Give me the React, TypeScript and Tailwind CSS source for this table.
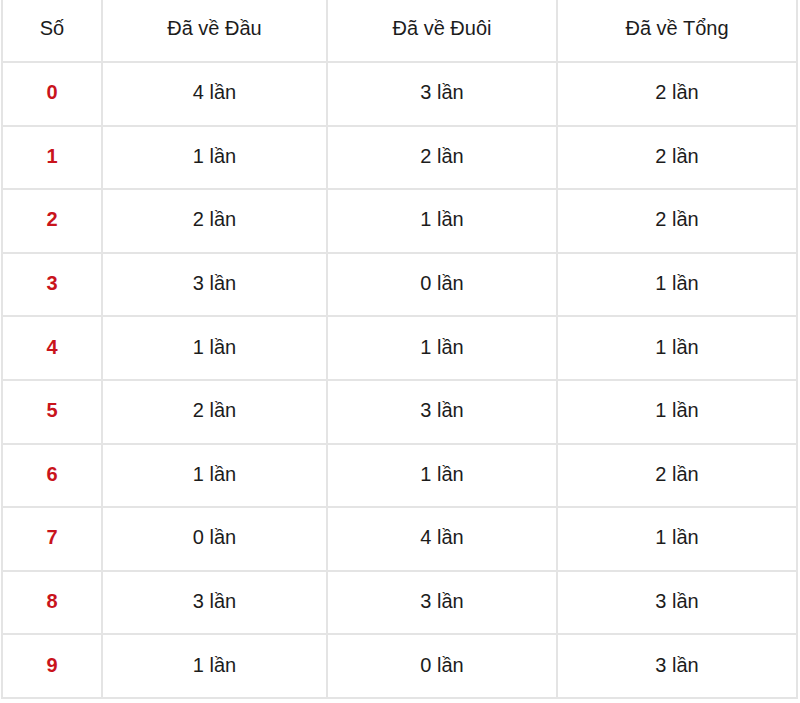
const rows: [number, number, number, number][] = [
  [0, 4, 3, 2],
  [1, 1, 2, 2],
  [2, 2, 1, 2],
  [3, 3, 0, 1],
  [4, 1, 1, 1],
  [5, 2, 3, 1],
  [6, 1, 1, 2],
  [7, 0, 4, 1],
  [8, 3, 3, 3],
  [9, 1, 0, 3],
];

const cell = "text-center align-middle pb-[3px] border-2 border-[#e4e4e4]";

export default function App() {
  return (
    <div className="w-[800px] h-[703px] bg-white overflow-hidden font-['Liberation_Sans',Arial,sans-serif] text-[#1c1c1c]">
      <table className="ml-[1px] w-[797px] border-collapse table-fixed text-[20px]">
        <colgroup>
          <col className="w-[100px]" />
          <col className="w-[225px]" />
          <col className="w-[230px]" />
          <col />
        </colgroup>
        <thead>
          <tr className="h-[62px]">
            {["Số", "Đã về Đầu", "Đã về Đuôi", "Đã về Tổng"].map((h) => (
              <th
                key={h}
                className="font-normal text-center align-middle pb-[6px] border-2 border-t-0 border-[#e4e4e4]"
              >
                {h}
              </th>
            ))}
          </tr>
        </thead>
        <tbody>
          {rows.map(([n, a, b, c]) => (
            <tr key={n} className="h-[63.6px]">
              <td className={`${cell} font-bold text-[#c9141c]`}>{n}</td>
              <td className={cell}>{a} lần</td>
              <td className={cell}>{b} lần</td>
              <td className={cell}>{c} lần</td>
            </tr>
          ))}
        </tbody>
      </table>
    </div>
  );
}
